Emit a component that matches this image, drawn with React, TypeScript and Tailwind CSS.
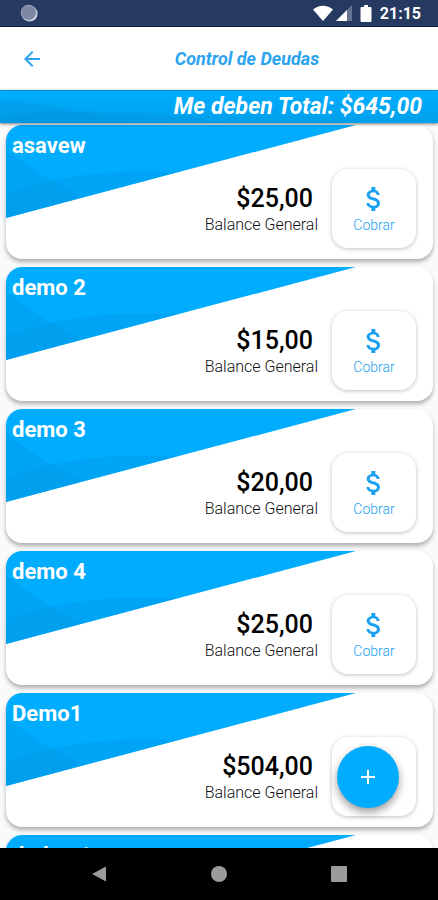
import React from 'react';
import { MdArrowBack, MdAttachMoney, MdAdd } from 'react-icons/md';

interface Debt {
  id: number;
  name: string;
  amount: string;
}

const debts: Debt[] = [
  { id: 1, name: 'asavew', amount: '$25,00' },
  { id: 2, name: 'demo 2', amount: '$15,00' },
  { id: 3, name: 'demo 3', amount: '$20,00' },
  { id: 4, name: 'demo 4', amount: '$25,00' },
  { id: 5, name: 'Demo1', amount: '$504,00' },
  { id: 6, name: 'dedeo 1', amount: '$10,00' },
];

function StatusBar() {
  return (
    <div className="flex h-[27px] shrink-0 items-center justify-between border-b border-[#0d1c45] bg-[#263960] pr-[17px] pl-5">
      <svg className="size-[18px]" viewBox="0 0 18 18">
        <circle cx="9.600" cy="9.600" r="8" fill="#d5dae2" />
        <circle cx="8.600" cy="8.600" r="7.400" fill="#7d88a3" stroke="#98a2b6" />
      </svg>
      <div className="flex items-center text-white">
        <svg className="h-4 w-5" viewBox="0 0 20 16" fill="currentColor">
          <path d="M0 4.500C5.500-.6 14.500-.6 20 4.500L10 16z" />
        </svg>
        <svg className="ml-[3px] size-4" viewBox="0 0 16 16" fill="currentColor">
          <path d="M0 16L16 0v16z" opacity="0.300" />
          <path d="M0 16L11 5v11z" />
        </svg>
        <svg className="ml-2 h-[17px] w-3" viewBox="0 0 12 17" fill="currentColor">
          <path d="M4 0h4v2h2.500a1 1 0 011 1v13a1 1 0 01-1 1h-9a1 1 0 01-1-1V3a1 1 0 011-1H4z" />
        </svg>
        <span className="ml-2 pt-[2px] text-base leading-5 font-bold">21:15</span>
      </div>
    </div>
  );
}

function Header() {
  return (
    <header className="grid h-[63px] shrink-0 grid-cols-[40px_1fr_40px] items-center bg-white px-3 text-[#2ba3ee]">
      <button type="button" aria-label="Volver" className="flex size-10 items-center justify-center">
        <MdArrowBack className="size-6" />
      </button>
      <h1 className="pl-14 text-center text-lg font-bold italic">Control de Deudas</h1>
    </header>
  );
}

function TotalBar() {
  return (
    <div className="relative z-10 flex h-[33px] shrink-0 items-center justify-end border-t border-[#1287c8] bg-linear-to-b from-[#00aeff] to-[#009fea] pr-4 shadow-[0_1px_3px_rgba(0,0,0,0.500)]">
      <svg className="absolute inset-0 h-full w-full" viewBox="0 0 438 33" preserveAspectRatio="none">
        <path d="M0 8Q50 14 90 24T190 33H0z" fill="#0093dc" opacity="0.300" />
        <path d="M0 26Q110 14 230 33H0z" fill="#0093dc" opacity="0.300" />
      </svg>
      <p className="relative text-[23px] leading-8 font-bold text-white italic">Me deben Total: $645,00</p>
    </div>
  );
}

function DebtCard({ debt }: { debt: Debt }) {
  return (
    <li className="relative flex h-[134px] shrink-0 flex-col justify-between overflow-hidden rounded-2xl bg-white shadow-[0_3px_4px_rgba(0,0,0,0.300)]">
      <svg className="absolute top-0 left-0 h-[93px] w-[82%]" viewBox="0 0 350 93" preserveAspectRatio="none">
        <path d="M0 0H350L0 93z" fill="#00acfe" />
        <path d="M0 24Q36 53 77 72L0 93z" fill="#009be8" opacity="0.450" />
        <path d="M0 69Q70 42 172 47L0 93z" fill="#009be8" opacity="0.450" />
      </svg>
      <h2 className="relative px-[6px] pt-[7px] text-[22px] leading-7 font-bold text-white">{debt.name}</h2>
      <div className="relative flex items-center justify-end gap-[14px] pr-[17px] pb-[11px]">
        <div className="pt-1 text-right">
          <p className="pr-[5px] text-[25px] leading-7 font-medium text-black">{debt.amount}</p>
          <p className="text-base leading-6 font-light text-[#111]">Balance General</p>
        </div>
        <button
          type="button"
          className="flex h-[79px] w-[84px] flex-col items-center justify-center rounded-2xl bg-white text-[#1ba1f2] shadow-[0_1px_4px_rgba(0,0,0,0.250)]"
        >
          <MdAttachMoney className="size-8" />
          <span className="text-sm leading-5 font-light">Cobrar</span>
        </button>
      </div>
    </li>
  );
}

function NavigationBar() {
  return (
    <nav className="flex h-[52px] shrink-0 items-center justify-center gap-[104px] bg-black text-[#9b9b9b]">
      <button type="button" aria-label="Atrás">
        <svg className="size-4" viewBox="0 0 16 16" fill="currentColor">
          <path d="M15 .5v15L1 8z" />
        </svg>
      </button>
      <button type="button" aria-label="Inicio" className="size-4 rounded-full bg-[#9b9b9b]" />
      <button type="button" aria-label="Recientes" className="size-4 rounded-[1px] bg-[#9b9b9b]" />
    </nav>
  );
}

function App() {
  return (
    <div className="flex h-screen flex-col overflow-hidden bg-[#fafafa] font-[Roboto,sans-serif]">
      <StatusBar />
      <Header />
      <TotalBar />
      <main className="relative min-h-0 flex-1">
        <ul className="flex h-full flex-col gap-2 overflow-hidden pt-[2px] pr-[5px] pl-[6px]">
          {debts.map(debt => (
            <DebtCard key={debt.id} debt={debt} />
          ))}
        </ul>
        <button
          type="button"
          aria-label="Agregar deuda"
          className="absolute right-[39px] bottom-10 flex size-[62px] items-center justify-center rounded-full bg-[#00acfe] text-white shadow-[0_4px_9px_rgba(0,0,0,0.400)]"
        >
          <MdAdd className="size-6" />
        </button>
      </main>
      <NavigationBar />
    </div>
  );
}

export default App;
